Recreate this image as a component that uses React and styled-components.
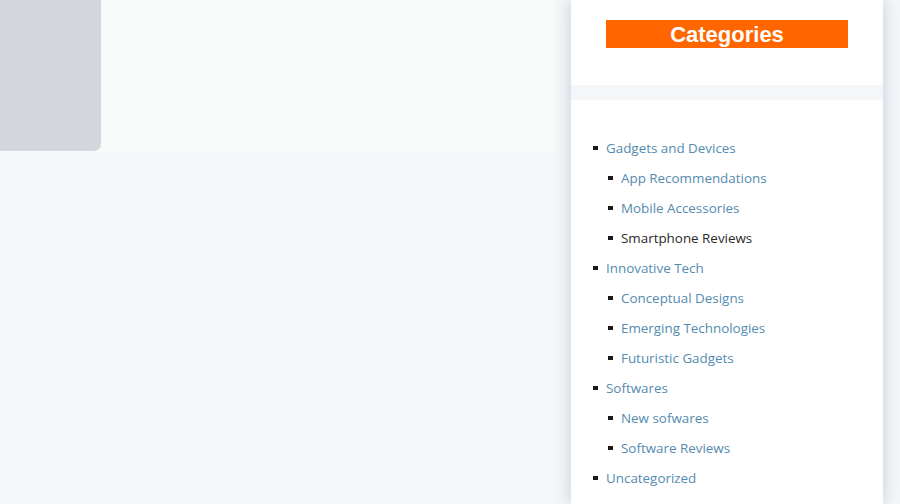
import React from 'react'
import styled, { createGlobalStyle } from 'styled-components'

const GlobalStyle = createGlobalStyle`
    body {
        margin: 0;
        background: #f5f7f9;
        font-family: "Open Sans", "Liberation Sans", sans-serif;
    }
`

const categories = [
    { name: 'Gadgets and Devices', children: [
        { name: 'App Recommendations' },
        { name: 'Mobile Accessories' },
        { name: 'Smartphone Reviews', current: true },
    ] },
    { name: 'Innovative Tech', children: [
        { name: 'Conceptual Designs' },
        { name: 'Emerging Technologies' },
        { name: 'Futuristic Gadgets' },
    ] },
    { name: 'Softwares', children: [
        { name: 'New sofwares' },
        { name: 'Software Reviews' },
    ] },
    { name: 'Uncategorized' },
]

const App = () => {
    return (
        <Page>
            <GlobalStyle />
            <Main>
                <Hero>
                    <Thumb />
                </Hero>
            </Main>
            <Sidebar>
                <Widget>
                    <Title>Categories</Title>
                </Widget>
                <ListWidget>
                    <List>
                        {categories.map(cat => (
                            <Item key={cat.name}>
                                <Link>{cat.name}</Link>
                                {cat.children && (
                                    <SubList>
                                        {cat.children.map(sub => (
                                            <Item key={sub.name}>
                                                <Link current={sub.current ? 1 : 0}>{sub.name}</Link>
                                            </Item>
                                        ))}
                                    </SubList>
                                )}
                            </Item>
                        ))}
                    </List>
                </ListWidget>
            </Sidebar>
        </Page>
    )
}

const Page = styled.div`
    display: flex;
    height: 504px;
    overflow: hidden;
`

const Main = styled.div`
    width: 555px;
    flex-shrink: 0;
`

const Hero = styled.div`
    height: 152px;
    background: #f9fafa;
`

const Thumb = styled.div`
    width: 101px;
    height: 151px;
    background: #d4d6db;
    border-radius: 0 0 7px 0;
`

const Sidebar = styled.aside`
    margin-left: 16px;
    width: 312px;
    flex-shrink: 0;
    background: #f4f6f8;
    box-shadow: 0 0 16px rgba(160, 168, 190, 0.55);
    display: flex;
    flex-direction: column;
    gap: 15px;
`

const Widget = styled.section`
    background: #fff;
    padding: 20px 35px 37px;
`

const ListWidget = styled.section`
    background: #fff;
    padding: 33px 0 0 22px;
    flex: 1;
`

const Title = styled.h2`
    margin: 0;
    height: 28px;
    background: #ff6600;
    color: #fff;
    font-family: "Liberation Sans", Arial, sans-serif;
    font-weight: 700;
    font-size: 22px;
    line-height: 29px;
    text-align: center;
`

const List = styled.ul`
    list-style: none;
    margin: 0;
    padding: 0;
`

const SubList = styled.ul`
    list-style: none;
    margin: 0;
    padding: 0 0 0 2px;
`

const Item = styled.li`
    position: relative;
    padding-left: 13px;
    font-size: 13.4px;
    line-height: 30px;
    &::before {
        content: '';
        position: absolute;
        left: 0;
        top: 13px;
        width: 5px;
        height: 4px;
        background: #1a1a1a;
    }
`

const Link = styled.a`
    color: ${p => (p.current ? '#2a2a2a' : '#548bb0')};
    text-decoration: none;
    cursor: pointer;
`

export default App
